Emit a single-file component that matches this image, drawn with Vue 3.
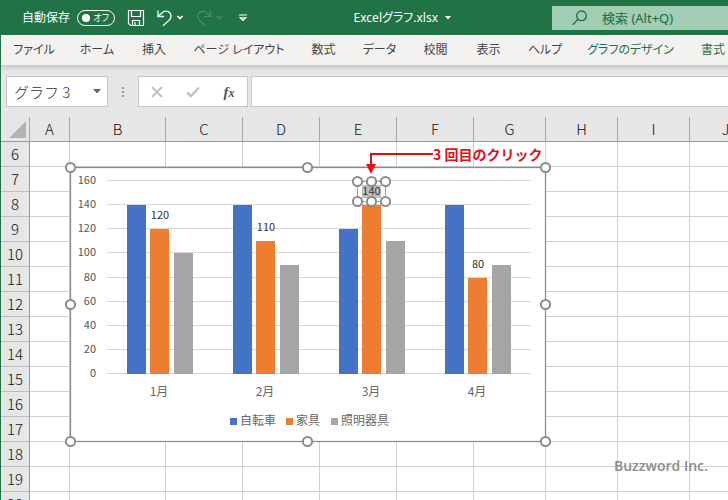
<script setup>
import { ref } from 'vue'

const tabs = [
  { label: 'ファイル' },
  { label: 'ホーム' },
  { label: '挿入' },
  { label: 'ページ レイアウト' },
  { label: '数式' },
  { label: 'データ' },
  { label: '校閲' },
  { label: '表示' },
  { label: 'ヘルプ' },
  { label: 'グラフのデザイン', contextual: true },
  { label: '書式', contextual: true },
]

const columns = ['A', 'B', 'C', 'D', 'E', 'F', 'G', 'H', 'I', 'J']
const rows = Array.from({ length: 15 }, (_, i) => i + 6)

const autoSave = ref(false)
const objectName = ref('グラフ 3')
const formula = ref('')
const query = ref('')

// Chart geometry, in the coordinates of the chart drawing
const baseY = 213
const plotLeft = 43
const plotRight = 467
const ticks = [0, 20, 40, 60, 80, 100, 120, 140, 160]
const months = ['1月', '2月', '3月', '4月']
const series = [
  { name: '自転車', color: '#4472c4', values: [140, 140, 120, 140], legendX: 166 },
  { name: '家具', color: '#ed7d31', values: [120, 110, 140, 80], legendX: 222 },
  { name: '照明器具', color: '#a5a5a5', values: [100, 90, 110, 90], legendX: 267 },
]
const y = (v) => Math.round(baseY - (v * 193) / 160)
const barX = (m, s) => plotLeft + m * 106 + 20 + s * 24 - (s ? 1 : 0)
const frameHandles = [
  [6, 6], [243, 6], [481, 6],
  [6, 143], [481, 143],
  [6, 280], [243, 280], [481, 280],
]
const labelHandles = [
  [293, 20], [307, 20], [321, 20],
  [293, 40], [307, 40], [321, 40],
]
</script>

<template>
  <div class="window">
    <header class="titlebar">
      <label class="autosave">
        <span>自動保存</span>
        <input v-model="autoSave" type="checkbox" />
        <span class="switch"><i></i><b>オフ</b></span>
      </label>
      <button class="tool save" aria-label="上書き保存">
        <svg width="18" height="18" viewBox="0 0 18 18" fill="none" stroke="#fff" stroke-width="1.2">
          <path d="M1.5 1.5H16.5V16.5H3.5L1.5 14.5ZM4.5 1.5V7.5H13.5V1.5M5.5 16.5V11.5H12.5V16.5M8 13V16" />
        </svg>
      </button>
      <button class="tool undo" aria-label="元に戻す">
        <svg width="28" height="18" viewBox="0 0 28 18" fill="none" stroke="#fff" stroke-width="1.3">
          <path d="M1 1.5V7.5H7M1.3 7.2L5.5 3.4C9 .5 14 3 14 7.2C14 9 13.2 10.2 12 11.4L6 16.7" />
          <path d="M20.5 7L23 9.5L25.5 7" stroke-width="1.7" />
        </svg>
      </button>
      <button class="tool redo" aria-label="やり直し" disabled>
        <svg width="28" height="18" viewBox="0 0 28 18" fill="none" stroke="#4b9069" stroke-width="1.2">
          <path d="M13.5 1.5V7.5H7.5M13.2 7.2L9 3.4C5.5.5.8 3 .8 7.2C.8 9 1.5 10.2 2.7 11.4L8.5 16.7" />
          <path d="M20 7L22.5 9.5L25 7" stroke-width="1.4" />
        </svg>
      </button>
      <button class="tool" aria-label="クイック アクセス ツール バーのカスタマイズ">
        <svg width="8" height="8" viewBox="0 0 8 8" fill="none" stroke="#fff" stroke-width="1.2">
          <path d="M0 1H8M1.2 3.8L4 6.5L6.8 3.8Z" />
        </svg>
      </button>
      <button class="filename">
        Excelグラフ.xlsx
        <svg width="6" height="4" viewBox="0 0 6 4"><path d="M0 0H6L3 3.5Z" fill="#fff" /></svg>
      </button>
      <label class="search">
        <svg width="16" height="16" viewBox="0 0 16 16" fill="none" stroke="#1c6a40" stroke-width="1.3">
          <circle cx="9.5" cy="5.8" r="4.8" /><path d="M6 9.4L.8 14.8" />
        </svg>
        <input v-model="query" type="text" placeholder="検索 (Alt+Q)" aria-label="検索" />
      </label>
    </header>

    <div class="client">
      <nav class="tabs">
        <button v-for="t in tabs" :key="t.label" :class="{ contextual: t.contextual }">{{ t.label }}</button>
      </nav>

      <div class="formulabar">
        <label class="namebox">
          <input v-model="objectName" type="text" aria-label="名前ボックス" />
          <svg width="8" height="5" viewBox="0 0 8 5"><path d="M0 0H8L4 4.5Z" fill="#666" /></svg>
        </label>
        <svg class="grip" width="2" height="12" viewBox="0 0 2 12" fill="#999">
          <path d="M0 1H2V3H0ZM0 5H2V7H0ZM0 9H2V11H0Z" />
        </svg>
        <div class="actions">
          <button aria-label="キャンセル">
            <svg width="12" height="12" viewBox="0 0 12 12" stroke="#c3c3c3" stroke-width="2"><path d="M1 1L11 11M11 1L1 11" /></svg>
          </button>
          <button aria-label="入力">
            <svg width="14" height="12" viewBox="0 0 14 12" fill="none" stroke="#c3c3c3" stroke-width="2.4"><path d="M1 6.5L4.8 10L13 1.5" /></svg>
          </button>
          <button class="fx" aria-label="関数の挿入">f<small>x</small></button>
        </div>
        <input v-model="formula" class="formula" type="text" aria-label="数式バー" />
      </div>

      <main class="sheet">
        <table>
          <colgroup>
            <col class="w-head" /><col class="w-a" /><col class="w-b" />
            <col class="w-c" /><col class="w-c" /><col class="w-c" /><col class="w-c" />
            <col class="w-g" /><col class="w-g" /><col class="w-g" /><col class="w-g" /><col />
          </colgroup>
          <thead>
            <tr>
              <th class="corner">
                <svg width="17" height="17" viewBox="0 0 17 17"><path d="M17 0V17H0Z" fill="#b3b3b3" /></svg>
              </th>
              <th v-for="c in columns" :key="c" scope="col">{{ c }}</th>
              <th></th>
            </tr>
          </thead>
          <tbody>
            <tr v-for="r in rows" :key="r">
              <th scope="row">{{ r }}</th>
              <td v-for="c in columns" :key="c"></td>
              <td></td>
            </tr>
          </tbody>
        </table>

        <svg class="chart" width="488" height="287" viewBox="0 0 488 287" role="img" aria-label="グラフ 3">
          <rect x="6.5" y="6.5" width="475" height="274" fill="#fff" stroke="#8c8c8c" stroke-width="1.3" />
          <g v-for="t in ticks" :key="t">
            <path :d="`M${plotLeft} ${y(t) - 0.5}H${plotRight}`" stroke="#d9d9d9" />
            <text class="num" x="32" :y="y(t) + 3" text-anchor="end">{{ t }}</text>
          </g>
          <g v-for="(s, si) in series" :key="s.name">
            <rect
              v-for="(v, mi) in s.values" :key="mi"
              :x="barX(mi, si)" :y="y(v)" width="19" :height="baseY - y(v)" :fill="s.color"
            />
            <rect :x="s.legendX" y="257" width="7" height="7" :fill="s.color" />
            <text class="cat" :x="s.legendX + 10" y="264">{{ s.name }}</text>
          </g>
          <text v-for="(m, i) in months" :key="m" class="cat" :x="95 + i * 106" y="235" text-anchor="middle">{{ m }}</text>
          <rect x="298" y="24" width="19" height="13" fill="#bfbfbf" />
          <rect x="293.5" y="20.5" width="28" height="20" fill="none" stroke="#777" stroke-dasharray="2 1" />
          <text
            v-for="(v, i) in series[1].values" :key="i" class="num value"
            :x="i === 2 ? 307.5 : 96 + i * 106" :y="i === 2 ? 34 : y(v) - 10" text-anchor="middle"
          >{{ v }}</text>
          <g fill="#fff" stroke="#8c8c8c" stroke-width="2">
            <circle v-for="([cx, cy], i) in frameHandles" :key="i" :cx="cx + 0.5" :cy="cy + 0.5" r="4.6" />
            <circle v-for="([cx, cy], i) in labelHandles" :key="'l' + i" :cx="cx + 0.5" :cy="cy + 0.5" r="4.6" />
          </g>
        </svg>

        <div class="callout">
          <svg width="68" height="24" viewBox="0 0 68 24">
            <path d="M68 3H6V13" fill="none" stroke="#c8171b" stroke-width="2" />
            <path d="M1 13H11L6 23Z" fill="#f00a0a" />
          </svg>
          <span>3 回目のクリック</span>
        </div>
        <div class="credit">Buzzword Inc.</div>
      </main>
    </div>
  </div>
</template>

<style>
body {
  overflow: hidden;
}
</style>

<style scoped>
* {
  box-sizing: border-box;
}
.window {
  display: flex;
  flex-direction: column;
  height: 100vh;
  overflow: hidden;
  background: #217346;
  font: 12px/18px "Noto Sans", "Noto Sans CJK JP", sans-serif;
  font-feature-settings: "palt";
}
button,
input {
  margin: 0;
  padding: 0;
  border: 0;
  background: none;
  color: inherit;
  font: inherit;
  font-feature-settings: inherit;
  outline: none;
}
svg {
  display: block;
  flex: none;
}
.titlebar {
  display: flex;
  align-items: center;
  height: 35px;
  flex: none;
  padding-left: 22px;
  color: #fff;
}
.autosave {
  display: flex;
  align-items: center;
  gap: 7px;
  margin-right: 12px;
}
.autosave input {
  position: absolute;
  opacity: 0;
}
.switch {
  display: flex;
  align-items: center;
  justify-content: space-between;
  width: 38px;
  height: 16px;
  padding: 0 5px 0 4px;
  border: 1px solid #fff;
  border-radius: 8px;
}
.switch i {
  width: 8px;
  height: 8px;
  border-radius: 50%;
  background: #fff;
}
.switch b {
  font-size: 9px;
  font-weight: 400;
}
.tool {
  display: flex;
  margin-right: 12px;
}
.redo {
  margin-right: 14px;
}
.filename {
  display: flex;
  align-items: center;
  gap: 7px;
  margin-left: auto;
  margin-right: 101px;
}
.search {
  display: flex;
  align-items: center;
  gap: 14px;
  width: 176px;
  height: 24px;
  padding-left: 20px;
  background: #a0cdb4;
  color: #1c6a40;
}
.search input {
  flex: 1;
  min-width: 0;
  font-size: 13px;
}
.search input::placeholder {
  color: #1c6a40;
  opacity: 1;
}
.client {
  display: flex;
  flex-direction: column;
  flex: 1;
  min-height: 0;
  margin-left: 1px;
  background: #e6e6e6;
}
.tabs {
  display: grid;
  grid-template-columns: 66px 60px 54px 116px 53px 59px 53px 53px 60px 111px 1fr;
  height: 30px;
  flex: none;
  background: #f3f2f1;
  color: #444;
  white-space: nowrap;
}
.tabs .contextual {
  color: #217346;
}
.tabs button:last-child {
  padding-left: 15px;
  text-align: left;
}
.formulabar {
  display: flex;
  align-items: center;
  height: 52px;
  flex: none;
  padding: 1px 0 0 5px;
  background: linear-gradient(#cbc9c9, #e6e6e6 6px);
}
.namebox,
.actions,
.formula {
  height: 31px;
  border: 1px solid #c6c6c6;
  background: #fff;
}
.namebox {
  display: flex;
  align-items: center;
  width: 102px;
  padding: 0 6px 0 7px;
  color: #333;
}
.namebox input {
  flex: 1;
  min-width: 0;
  font: 300 15px/20px "Noto Sans CJK JP", sans-serif;
  font-feature-settings: normal;
}
.grip {
  margin: 0 14px;
}
.actions {
  display: flex;
  width: 110px;
  margin-right: 3px;
}
.actions button {
  display: flex;
  align-items: center;
  justify-content: center;
  flex: 1;
}
.actions .fx {
  color: #555;
  font: italic bold 15px/18px "Liberation Serif", serif;
}
.fx small {
  padding-top: 3px;
  font-size: 12px;
}
.formula {
  flex: 1;
  min-width: 0;
  border-right: 0;
}
.sheet {
  position: relative;
  flex: 1;
  min-height: 0;
  overflow: hidden;
  background: #fff;
}
table {
  width: 100%;
  table-layout: fixed;
  border-collapse: separate;
  border-spacing: 0;
}
.w-head { width: 29px; }
.w-a { width: 40px; }
.w-b { width: 96px; }
.w-c { width: 77px; }
.w-g { width: 72px; }
th,
td {
  height: 25px;
  padding: 0;
  border: solid #d0d0d0;
  border-width: 0 1px 1px 0;
}
th {
  background: #e6e6e6;
  color: #111;
  font: 300 15px/24px "Noto Sans CJK JP", sans-serif;
}
thead th {
  border-bottom-color: #999;
  border-right-color: #a6a6a6;
}
tbody th {
  border-right-color: #999;
  border-bottom-color: #bdbdbd;
}
.corner svg {
  margin-left: 8px;
}
.chart {
  position: absolute;
  left: 63px;
  top: 44px;
}
.num {
  fill: #555;
  font: 11px "Noto Sans CJK JP", sans-serif;
}
.value {
  fill: #333;
}
.cat {
  fill: #666;
  font: 12px "Noto Sans CJK JP", sans-serif;
}
.callout {
  position: absolute;
  left: 364px;
  top: 34px;
  display: flex;
  align-items: flex-start;
  color: #dc1418;
  font: bold 14px/6px "Noto Sans CJK JP", sans-serif;
  white-space: nowrap;
}
.credit {
  position: absolute;
  left: 613px;
  top: 340px;
  color: #8c8c8c;
  font: 600 14px/18px "Open Sans", sans-serif;
}
</style>
